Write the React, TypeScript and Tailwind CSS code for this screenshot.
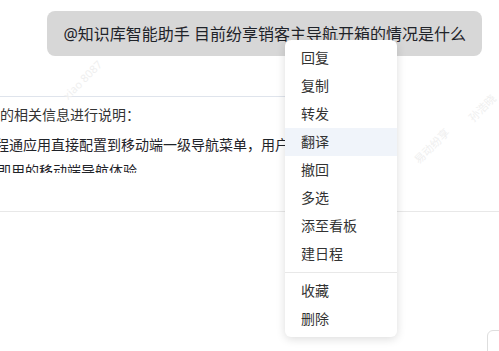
const menuItems = ["回复", "复制", "转发", "翻译", "撤回", "多选", "添至看板", "建日程"];
const menuTail = ["收藏", "删除"];

const font = "font-['Noto_Sans','Noto_Sans_CJK_SC',sans-serif]";

function Watermark({ text, className }: { text: string; className: string }) {
  return (
    <div
      className={
        "pointer-events-none absolute -rotate-45 whitespace-nowrap text-[11px] text-[#efefef] " +
        className
      }
    >
      {text}
    </div>
  );
}

function MenuItem({ label, active }: { label: string; active?: boolean }) {
  return (
    <div
      className={
        "flex h-[28px] items-center pb-[2px] pl-4 text-[14px] text-[#333] " +
        (active ? "bg-[#f0f4fa]" : "")
      }
    >
      {label}
    </div>
  );
}

export default function App() {
  return (
    <div className={"relative h-[351px] w-[499px] overflow-hidden bg-white " + font}>
      <Watermark text="xiao 8087" className="left-[58px] top-[72px]" />
      <Watermark text="孙浩晓" className="left-[466px] top-[100px]" />
      <Watermark text="易动纷享" className="left-[410px] top-[138px]" />

      <div className="flex justify-end pr-[17px] pt-[11px]">
        <div className="flex h-[45px] items-center rounded-lg bg-[#d7d7d7] px-4 text-[16px] text-[#1f2329]">
          @知识库智能助手 目前纷享销客主导航开箱的情况是什么
        </div>
      </div>

      <div className="mt-[40px] h-[77px] w-[392px] overflow-hidden border-t border-[#dfe4ec] bg-white text-[14px] text-[#1f2329]">
        <p className="mt-[7px] leading-[22px] text-[#333]">的相关信息进行说明：</p>
        <p className="-ml-[5px] mt-[6px] whitespace-nowrap leading-[26px]">
          程通应用直接配置到移动端一级导航菜单，用户可以快速访问
        </p>
        <p className="-ml-[3px] mt-[1px] whitespace-nowrap leading-[24px]">即用的移动端导航体验</p>
      </div>

      <div className="mt-[38px] border-t border-[#e8e8e8]" />

      <div className="absolute left-[487px] top-[330px] h-[40px] w-[40px] rounded-md border border-[#dedede] bg-white" />

      <div className="absolute left-[285px] top-[40px] flex w-[112px] flex-col rounded-md bg-white py-1 shadow-[0_2px_10px_rgba(0,0,0,0.14)]">
        {menuItems.map((item) => (
          <MenuItem key={item} label={item} active={item === "翻译"} />
        ))}
        <div className="my-1 border-t border-[#e8e8e8]" />
        {menuTail.map((item) => (
          <MenuItem key={item} label={item} />
        ))}
      </div>
    </div>
  );
}
